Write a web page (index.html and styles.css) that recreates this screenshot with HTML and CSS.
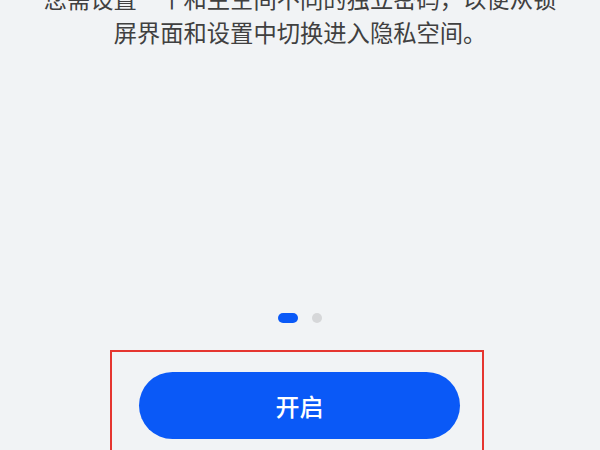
FILE: index.html
```html
<!DOCTYPE html>
<html lang="zh-CN">
<head>
  <meta charset="UTF-8">
  <meta name="viewport" content="width=device-width, initial-scale=1.0">
  <title>隐私空间</title>
  <link rel="stylesheet" href="styles.css">
</head>
<body>
  <div class="page">
    <p class="intro">您需设置一个和主空间不同的独立密码，以便从锁屏界面和设置中切换进入隐私空间。</p>

    <div class="dots">
      <span class="dot active"></span>
      <span class="dot"></span>
    </div>

    <div class="highlight">
      <button class="start" type="button">开启</button>
    </div>
  </div>
</body>
</html>
```

FILE: styles.css
```css
html, body {
  margin: 0;
  height: 100%;
  overflow: hidden;
}

body {
  background-color: #f1f3f5;
  font-family: "Noto Sans CJK SC", "Noto Sans", sans-serif;
}

.page {
  display: flex;
  flex-direction: column;
}

.intro {
  margin: -19px 0 0;
  padding: 0 40px;
  font-size: 23.3px;
  line-height: 34px;
  color: #404040;
  text-align: center;
}

.dots {
  display: flex;
  justify-content: center;
  gap: 14px;
  margin-top: 264px;
}

.dot {
  width: 10px;
  height: 10px;
  border-radius: 5px;
  background-color: #d6d7d9;
}

.dot.active {
  width: 20px;
  background-color: #0a59f7;
}

.highlight {
  box-sizing: border-box;
  width: 374px;
  height: 120px;
  margin: 27px 0 0 110px;
  padding: 20px 0 0 27px;
  border: 2px solid #e5352f;
}

.start {
  display: block;
  width: 321px;
  height: 67px;
  border: none;
  border-radius: 34px;
  background-color: #0a59f7;
  color: #fff;
  font-family: inherit;
  font-size: 24px;
  font-weight: 500;
  cursor: pointer;
}
```
